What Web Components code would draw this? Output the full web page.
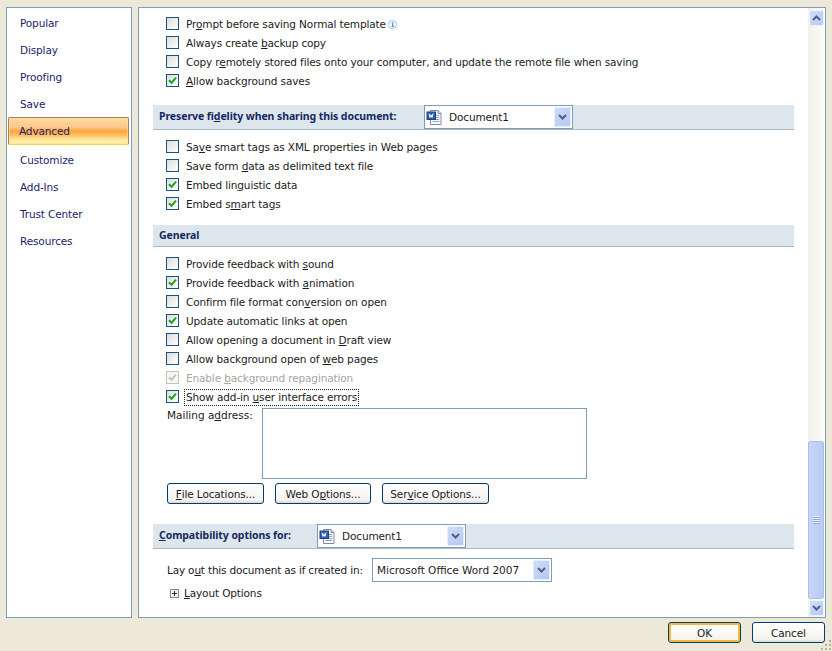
<!DOCTYPE html>
<html>
<head>
<meta charset="utf-8">
<title>Word Options</title>
<style>
  html, body { margin: 0; height: 100%; overflow: hidden; }
  body { background: #ece9d8; font: 10.5px/13px "DejaVu Sans", sans-serif; letter-spacing: -.13px; color: #1b1b1b; }
</style>
</head>
<body>
<options-dialog>
  <nav-item slot="nav">Popular</nav-item>
  <nav-item slot="nav">Display</nav-item>
  <nav-item slot="nav">Proofing</nav-item>
  <nav-item slot="nav">Save</nav-item>
  <nav-item slot="nav" selected>Advanced</nav-item>
  <nav-item slot="nav">Customize</nav-item>
  <nav-item slot="nav">Add-Ins</nav-item>
  <nav-item slot="nav">Trust Center</nav-item>
  <nav-item slot="nav">Resources</nav-item>

  <check-row>Pr<u>o</u>mpt before saving Normal template <info-mark></info-mark></check-row>
  <check-row>Always create <u>b</u>ackup copy</check-row>
  <check-row>Copy r<u>e</u>motely stored files onto your computer, and update the remote file when saving</check-row>
  <check-row checked><u>A</u>llow background saves</check-row>

  <section-bar style="margin-top:15px" label-width="265px" height="25px">
    <span>Preserve fi<u>d</u>elity when sharing this document:</span>
    <combo-box slot="control" width="149px" doc>Document1</combo-box>
  </section-bar>
  <div style="height:7px"></div>
  <check-row>Sa<u>v</u>e smart tags as XML properties in Web pages</check-row>
  <check-row>Save form <u>d</u>ata as delimited text file</check-row>
  <check-row checked>Embed lin<u>g</u>uistic data</check-row>
  <check-row checked>Embed s<u>m</u>art tags</check-row>

  <section-bar style="margin-top:12px" height="22px"><span>General</span></section-bar>
  <div style="height:7px"></div>
  <check-row>Provide feedback with <u>s</u>ound</check-row>
  <check-row checked>Provide feedback with <u>a</u>nimation</check-row>
  <check-row>Confirm file format con<u>v</u>ersion on open</check-row>
  <check-row checked>Update automatic links at open</check-row>
  <check-row>Allow opening a document in <u>D</u>raft view</check-row>
  <check-row>Allow background open of <u>w</u>eb pages</check-row>
  <check-row checked disabled>Enable <u>b</u>ackground repagination</check-row>
  <check-row checked focused>Show add-in <u>u</u>ser interface errors</check-row>

  <address-field>Mailing a<u>d</u>dress:</address-field>

  <button-row>
    <push-button width="97px"><u>F</u>ile Locations...</push-button>
    <push-button width="96px">Web O<u>p</u>tions...</push-button>
    <push-button width="107px">Ser<u>v</u>ice Options...</push-button>
  </button-row>

  <section-bar style="margin-top:20px" label-width="158px" height="25px">
    <span><u>C</u>ompatibility options for:</span>
    <combo-box slot="control" width="149px" doc>Document1</combo-box>
  </section-bar>

  <layout-row>
    <span>Lay o<u>u</u>t this document as if created in:</span>
    <combo-box slot="control" width="180px" height="24px" style="letter-spacing:0">Microsoft Office Word 2007</combo-box>
  </layout-row>
  <tree-row><u>L</u>ayout Options</tree-row>

  <push-button slot="footer" width="73px" default>OK</push-button>
  <push-button slot="footer" width="73px">Cancel</push-button>
</options-dialog>

<script>
const CHEVRON_DOWN = '<svg width="9" height="6" viewBox="0 0 9 6"><path d="M1 1l3.5 3.5L8 1" fill="none" stroke="#4d6185" stroke-width="2"/></svg>';
const CHEVRON_UP = '<svg width="9" height="6" viewBox="0 0 9 6"><path d="M1 5l3.5-3.5L8 5" fill="none" stroke="#4d6185" stroke-width="2"/></svg>';

function define(name, html, init) {
  customElements.define(name, class extends HTMLElement {
    connectedCallback() {
      if (this.shadowRoot) return;
      this.attachShadow({ mode: 'open' }).innerHTML = html;
      if (init) init(this, this.shadowRoot);
    }
  });
}

define('options-dialog', `
  <style>
    :host { display: flex; flex-direction: column; height: 651px; padding: 7px 6px 0; box-sizing: border-box; position: relative; }
    .panes { display: flex; gap: 6px; height: 611px; }
    .nav { width: 126px; box-sizing: border-box; border: 1px solid #7f9db9; background: #fff; padding: 2px 1px 0; }
    .main { flex: 1; min-width: 0; display: flex; border: 1px solid #7f9db9; background: #fff; }
    .content { flex: 1; min-width: 0; padding: 6px 14px 0; }
    .footer { display: flex; justify-content: flex-end; gap: 11px; margin: 4px 1px 0 0; }
    .grip { position: absolute; right: 1px; bottom: 1px; display: block; }
  </style>
  <div class="panes">
    <div class="nav"><slot name="nav"></slot></div>
    <div class="main">
      <div class="content"><slot></slot></div>
      <scroll-track></scroll-track>
    </div>
  </div>
  <div class="footer"><slot name="footer"></slot></div>
  <svg class="grip" width="10" height="10" viewBox="0 0 10 10" fill="#b4b1a1">
    <path d="M8 0h2v2h-2zM4 4h2v2h-2zM8 4h2v2h-2zM0 8h2v2h-2zM4 8h2v2h-2zM8 8h2v2h-2z"/>
  </svg>`);

define('nav-item', `
  <style>
    :host { display: block; height: 27px; box-sizing: border-box; padding: 7px 0 0 12px; color: #1c1c6b; }
    :host([selected]) { height: 28px; margin: -1px 1px 2px 0; padding: 6px 0 0 10px; line-height: 15px;
      border: 1px solid #a8825a; border-bottom-color: #f7d04a; border-radius: 2px;
      background: linear-gradient(#fdd9a6 0, #fdc98a 35%, #fca63d 50%, #fdb65c 62%, #feeb9f 85%, #fff0ab 100%);
      box-shadow: 0 1px 0 1px #fff, 0 2px 0 0 #c5ccd2, inset 0 0 0 1px rgba(255,225,130,.55); }
  </style><slot></slot>`);

define('check-row', `
  <style>
    :host { display: flex; align-items: center; height: 19px; padding-left: 13px; gap: 7px; white-space: nowrap; color: #1b1b1b; }
    :host([disabled]) { color: #a5a5a0; }
    .box { width: 13px; height: 13px; box-sizing: border-box; flex: none; border: 1px solid #1c5180;
      background: linear-gradient(135deg, #dcdcd7, #ffffff); display: flex; align-items: center; justify-content: center; }
    :host([disabled]) .box { border-color: #c3c3bb; background: #f7f7f3; }
    svg { display: none; }
    :host([checked]) svg { display: block; }
    :host([disabled]) path { stroke: #c4c4bc; }
    .label { margin-top: 1px; line-height: 13px; }
    :host([focused]) .label { outline: 1px dotted #222; outline-offset: 0; padding: 1px; margin: 1px 0 0 -1px; line-height: 13px; }
  </style>
  <span class="box"><svg width="9" height="9" viewBox="0 0 9 9"><path d="M1 4.2l2.6 2.6L8 1.6" fill="none" stroke="#21a121" stroke-width="2"/></svg></span>
  <span class="label"><slot></slot></span>`);

define('info-mark', `
  <style>
    :host { display: inline-block; vertical-align: -1px; width: 9px; height: 9px; margin-left: -1px; }
    svg { display: block; }
    text { font: bold 7px "DejaVu Serif", serif; }
  </style>
  <svg width="9" height="9" viewBox="0 0 9 9"><circle cx="4.5" cy="4.5" r="4" fill="#fff" stroke="#a3bfe6"/><text x="4.5" y="7" text-anchor="middle" fill="#4a7cc8">i</text></svg>`);

define('section-bar', `
  <style>
    :host { display: flex; align-items: center; box-sizing: border-box; background: #dde6ed; border-bottom: 1px solid #a9b9c6;
      color: #15285f; font: bold 10.5px/13px "Noto Sans", sans-serif; letter-spacing: -.08px; padding-left: 6px; white-space: nowrap; }
    .label { flex: none; margin-top: -1px; }
    .control { align-self: flex-start; display: flex; font: 10.5px/13px "DejaVu Sans", sans-serif; letter-spacing: -.13px; }
  </style>
  <div class="label"><slot></slot></div>
  <div class="control"><slot name="control"></slot></div>`, (el, root) => {
    el.style.height = el.getAttribute('height');
    const w = el.getAttribute('label-width');
    if (w) root.querySelector('.label').style.width = w;
  });

define('combo-box', `
  <style>
    :host { display: flex; align-items: center; box-sizing: border-box; height: 24px; background: #fff; border: 1px solid #7f9db9; color: #1b1b1b; padding: 0 1px 0 4px; white-space: nowrap; }
    .doc { display: none; margin: 0 6px 0 -3px; flex: none; }
    :host([doc]) .doc { display: block; }
    .text { flex: 1; min-width: 0; }
    .arrow { flex: none; width: 17px; height: 20px; display: flex; align-items: center; justify-content: center;
      background: linear-gradient(135deg, #cfdcf8, #b4c8f3); border: 1px solid #e6edfb; box-sizing: border-box; border-radius: 1px; }
  </style>
  <svg class="doc" width="17" height="17" viewBox="0 0 17 17">
    <path d="M4.5 1.5h7.5l3 3v11h-10.5z" fill="#fff" stroke="#7a8aa6"/>
    <path d="M12 1.5v3h3" fill="#d6e0f0" stroke="#7a8aa6"/>
    <path d="M8 6.5h5.5M8 8.5h5.5M8 10.5h5.5M6.5 12.5h7" stroke="#8fa6cc"/>
    <rect x="1" y="3" width="8.5" height="7.5" fill="#2f5fb3" stroke="#1c3f85"/>
    <path d="M2.3 4.6l1 3.8 1-2.6 1 2.6 1-3.8" transform="translate(.7 0)" fill="none" stroke="#fff" stroke-width="1"/>
  </svg>
  <span class="text"><slot></slot></span>
  <span class="arrow">${CHEVRON_DOWN}</span>`, (el) => {
    el.style.width = el.getAttribute('width');
    if (el.hasAttribute('height')) el.style.height = el.getAttribute('height');
  });

define('address-field', `
  <style>
    :host { display: flex; height: 71px; margin: 2px 0 0; padding-left: 14px; }
    .label { width: 95px; flex: none; padding-top: 1px; white-space: nowrap; letter-spacing: 0; }
    .area { width: 325px; box-sizing: border-box; border: 1px solid #7f9db9; background: #fff; }
  </style>
  <div class="label"><slot></slot></div><div class="area"></div>`);

define('button-row', `
  <style>:host { display: flex; gap: 11px; margin-top: 4px; padding-left: 14px; }</style><slot></slot>`);

define('push-button', `
  <style>
    :host { display: flex; align-items: center; justify-content: center; box-sizing: border-box; height: 21px; padding-top: 1px; white-space: nowrap;
      border: 1px solid #003c74; border-radius: 3px; color: #1b1b1b;
      background: linear-gradient(#ffffff, #f4f3ee 85%, #dcd8cc); }
    :host([default]) { box-shadow: inset 0 0 0 2px #f8b636; background: linear-gradient(#fff, #f3f2ec); }
  </style><slot></slot>`, (el) => { el.style.width = el.getAttribute('width'); });

define('layout-row', `
  <style>
    :host { display: flex; align-items: center; padding-left: 14px; margin-top: 9px; white-space: nowrap; }
    .label { width: 205px; flex: none; letter-spacing: -.18px; }
  </style>
  <div class="label"><slot></slot></div><slot name="control"></slot>`);

define('tree-row', `
  <style>
    :host { display: flex; align-items: center; gap: 5px; margin-top: 3px; height: 17px; padding-left: 17px; }
    svg { flex: none; }
  </style>
  <svg width="9" height="9" viewBox="0 0 9 9"><rect x=".5" y=".5" width="8" height="8" fill="#f4f4ef" stroke="#8a8a85"/><path d="M2 4.5h5M4.5 2v5" stroke="#2b2b2b"/></svg>
  <span><slot></slot></span>`);

define('scroll-track', `
  <style>
    :host { display: flex; flex-direction: column; width: 17px; flex: none; background: linear-gradient(90deg, #f2f1ea, #fdfdfa); padding: 2px 0 1px; box-sizing: border-box; }
    .btn { flex: none; height: 16px; margin: 0 1px; box-sizing: border-box; display: flex; align-items: center; justify-content: center;
      background: linear-gradient(135deg, #d2dffa, #b6caf4); border: 1px solid #eef3fd; border-radius: 2px; }
    .space { flex: 1; }
    .thumb { flex: none; height: 158px; margin: 0 1px 1px 0; box-sizing: border-box; display: flex; align-items: center; justify-content: center;
      background: linear-gradient(90deg, #c6d5f8, #b9ccf6); border: 1px solid #f2f5fd; outline: 1px solid #a9bde6; outline-offset: -1px; border-radius: 2px; }
    .thumb i { display: block; width: 7px; height: 8px; background: repeating-linear-gradient(#eef3fd 0 1px, #8aa5e0 1px 2px); }
  </style>
  <div class="btn">${CHEVRON_UP}</div>
  <div class="space"></div>
  <div class="thumb"><i></i></div>
  <div class="btn">${CHEVRON_DOWN}</div>`);
</script>
</body>
</html>
